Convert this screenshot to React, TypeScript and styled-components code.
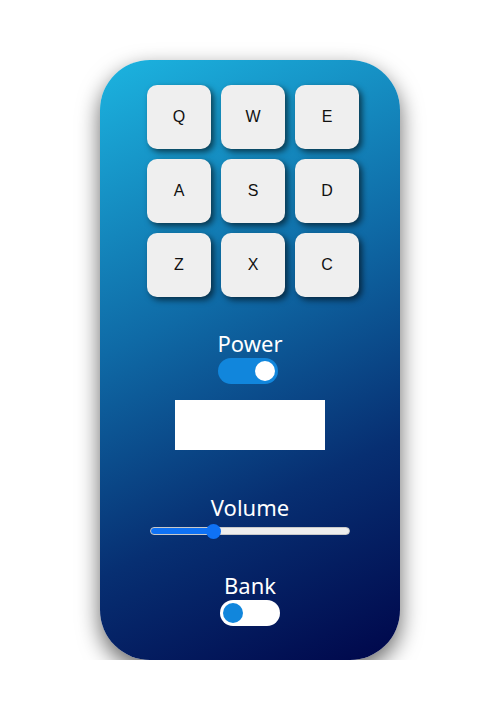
import React, { useState } from 'react';
import styled, { createGlobalStyle } from 'styled-components';

const GlobalStyle = createGlobalStyle`
    body {
        margin: 0;
        background: #ffffff;
        font-family: "Noto Sans", "Open Sans", sans-serif;
    }
`;

const Page = styled.div`
    display: flex;
    justify-content: center;
    padding-top: 60px;
`;

const Machine = styled.div`
    width: 300px;
    height: 600px;
    border-radius: 50px;
    background: linear-gradient(155deg, #1cb4e0 0%, #0f6aa6 40%, #072f72 70%, #00064a 100%);
    box-shadow: 0 9px 22px rgba(0, 0, 0, 0.6);
    display: flex;
    flex-direction: column;
    align-items: center;
    padding-top: 25px;
    box-sizing: border-box;
`;

const PadGrid = styled.div`
    display: grid;
    grid-template-columns: repeat(3, 64px);
    gap: 10px;
    padding-left: 6px;
`;

const Pad = styled.button`
    width: 64px;
    height: 64px;
    border: none;
    border-radius: 10px;
    background: #efefef;
    box-shadow: 3px 3px 6px rgba(0, 0, 0, 0.6);
    font-family: "Liberation Sans", Arial, sans-serif;
    font-size: 16px;
    color: #111;
    padding: 0;
    cursor: pointer;
`;

const Label = styled.div<{ $top: number }>`
    margin-top: ${p => p.$top}px;
    color: #ffffff;
    font-size: 22px;
    line-height: 30px;
    height: 30px;
`;

const Switch = styled.div<{ $on: boolean }>`
    width: 60px;
    height: 26px;
    border-radius: 13px;
    background: ${p => (p.$on ? '#1186dc' : '#ffffff')};
    display: flex;
    align-items: center;
    justify-content: ${p => (p.$on ? 'flex-end' : 'flex-start')};
    padding: 0 3px;
    box-sizing: border-box;
    margin-right: ${p => (p.$on ? 4 : 0)}px;
    cursor: pointer;
`;

const Knob = styled.div<{ $on: boolean }>`
    width: 20px;
    height: 20px;
    border-radius: 50%;
    background: ${p => (p.$on ? '#ffffff' : '#1186dc')};
`;

const Display = styled.div`
    width: 150px;
    height: 50px;
    margin-top: 16px;
    background: #ffffff;
`;

const Slider = styled.input`
    -webkit-appearance: none;
    appearance: none;
    width: 200px;
    height: 8px;
    margin: 5px 0 0;
    border-radius: 4px;
    border: 1px solid #c9c9c9;
    box-sizing: border-box;
    outline: none;

    &::-webkit-slider-thumb {
        -webkit-appearance: none;
        width: 15px;
        height: 15px;
        border-radius: 50%;
        background: #0f72f5;
        border: none;
    }
`;

export default function App() {
    const [power, setPower] = useState(true);
    const [bank, setBank] = useState(false);
    const [volume, setVolume] = useState(30);
    const keys = ['Q', 'W', 'E', 'A', 'S', 'D', 'Z', 'X', 'C'];

    return (
        <Page>
            <GlobalStyle />
            <Machine>
                <PadGrid>
                    {keys.map(k => (
                        <Pad key={k}>{k}</Pad>
                    ))}
                </PadGrid>
                <Label $top={31}>Power</Label>
                <Switch $on={power} onClick={() => setPower(!power)}>
                    <Knob $on={power} />
                </Switch>
                <Display />
                <Label $top={42}>Volume</Label>
                <Slider
                    type="range"
                    min={0}
                    max={100}
                    value={volume}
                    onChange={e => setVolume(Number(e.target.value))}
                    style={{
                        background: `linear-gradient(to right, #0f72f5 ${volume}%, #eeeeee ${volume}%)`,
                    }}
                />
                <Label $top={35}>Bank</Label>
                <Switch $on={bank} onClick={() => setBank(!bank)}>
                    <Knob $on={bank} />
                </Switch>
            </Machine>
        </Page>
    );
}
